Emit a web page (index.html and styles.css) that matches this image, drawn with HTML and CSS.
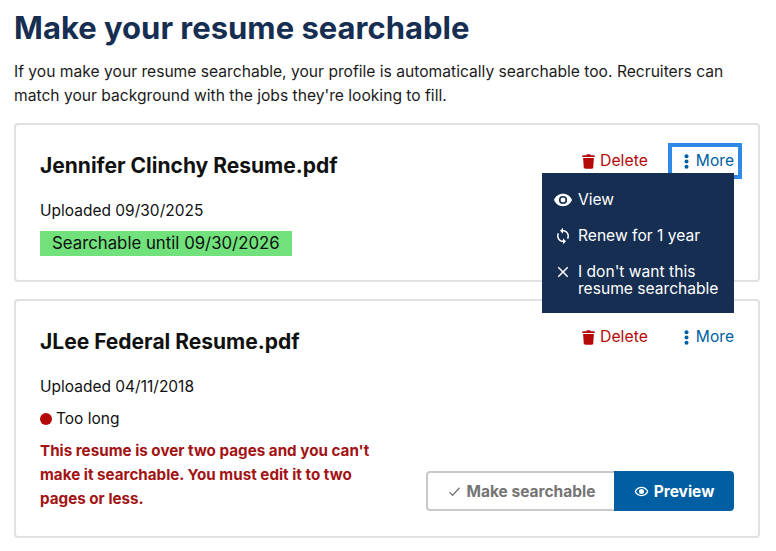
FILE: index.html
```html
<!DOCTYPE html>
<html lang="en">
<head>
<meta charset="utf-8">
<title>Make your resume searchable</title>
<link rel="stylesheet" href="styles.css">
</head>
<body>
<main class="page">
  <h1 class="title">Make your resume searchable</h1>
  <p class="intro">If you make your resume searchable, your profile is automatically searchable too. Recruiters can match your background with the jobs they're looking to fill.</p>

  <section class="card card-first">
    <div class="card-head">
      <h2 class="name">Jennifer Clinchy Resume.pdf</h2>
      <div class="actions">
        <button class="link link-delete">
          <svg class="ico" viewBox="0 0 14 16"><path d="M4.500 1.300C4.700.5 5.200.2 5.800.2h2.400c.6 0 1.100.3 1.300 1.100h3.300c.5 0 .9.300.9.800v1H.3v-1c0-.5.400-.8.900-.8zM1.200 4.200h11.600l-.7 10.300c-.1.800-.7 1.300-1.400 1.300H3.300c-.7 0-1.300-.5-1.400-1.300z" fill="#b50909"/></svg>
          Delete
        </button>
        <div class="more-wrap">
          <button class="link link-more is-focus">
            <svg class="ico-dots" viewBox="0 0 5 15"><circle cx="2.500" cy="2.300" r="2"/><circle cx="2.500" cy="7.500" r="2"/><circle cx="2.500" cy="12.700" r="2"/></svg>
            More
          </button>
          <ul class="menu">
            <li class="menu-item">
              <svg class="menu-ico" viewBox="1 1 22 22"><path d="M12 4.500C7 4.500 2.700 7.600 1 12c1.700 4.400 6 7.500 11 7.500s9.300-3.100 11-7.500c-1.700-4.400-6-7.500-11-7.500zM12 17a5 5 0 1 1 0-10 5 5 0 0 1 0 10zm0-8a3 3 0 1 0 0 6 3 3 0 0 0 0-6z" fill="#fff"/></svg>
              <span>View</span>
            </li>
            <li class="menu-item">
              <svg class="menu-ico" viewBox="0 0 24 24"><path d="M12 4V1L8 5l4 4V6c3.300 0 6 2.700 6 6 0 1-.25 2-.7 2.800l1.500 1.500C19.500 15 20 13.600 20 12c0-4.400-3.600-8-8-8zm0 14c-3.300 0-6-2.700-6-6 0-1 .25-2 .7-2.800L5.200 7.700C4.500 9 4 10.400 4 12c0 4.400 3.600 8 8 8v3l4-4-4-4z" fill="#fff"/></svg>
              <span>Renew for 1 year</span>
            </li>
            <li class="menu-item">
              <svg class="menu-ico" viewBox="0 0 24 24"><path d="M19 6.400 17.600 5 12 10.600 6.400 5 5 6.400 10.600 12 5 17.600 6.400 19 12 13.400 17.600 19 19 17.600 13.400 12z" fill="#fff"/></svg>
              <span>I don't want this<br>resume searchable</span>
            </li>
          </ul>
        </div>
      </div>
    </div>
    <p class="uploaded">Uploaded 09/30/2025</p>
    <p class="badge">Searchable until 09/30/2026</p>
  </section>

  <section class="card card-second">
    <div class="card-head">
      <h2 class="name">JLee Federal Resume.pdf</h2>
      <div class="actions">
        <button class="link link-delete">
          <svg class="ico" viewBox="0 0 14 16"><path d="M4.500 1.300C4.700.5 5.200.2 5.800.2h2.400c.6 0 1.100.3 1.300 1.100h3.300c.5 0 .9.300.9.800v1H.3v-1c0-.5.400-.8.900-.8zM1.200 4.200h11.600l-.7 10.300c-.1.800-.7 1.300-1.400 1.300H3.300c-.7 0-1.300-.5-1.400-1.300z" fill="#b50909"/></svg>
          Delete
        </button>
        <div class="more-wrap">
          <button class="link link-more">
            <svg class="ico-dots" viewBox="0 0 5 15"><circle cx="2.500" cy="2.300" r="2"/><circle cx="2.500" cy="7.500" r="2"/><circle cx="2.500" cy="12.700" r="2"/></svg>
            More
          </button>
        </div>
      </div>
    </div>
    <p class="uploaded">Uploaded 04/11/2018</p>
    <div class="card-foot">
      <div class="status">
        <p class="status-line"><span class="dot"></span>Too long</p>
        <p class="error">This resume is over two pages and you can't make it searchable. You must edit it to two pages or less.</p>
      </div>
      <div class="btn-group">
        <button class="btn btn-disabled">
          <svg class="btn-ico" viewBox="0 0 24 24"><path d="M4 13l5 5L20 6" fill="none" stroke="#757575" stroke-width="2"/></svg>
          Make searchable
        </button>
        <button class="btn btn-primary">
          <svg class="btn-ico" viewBox="0 0 24 24"><path d="M12 4.500C7 4.500 2.700 7.600 1 12c1.700 4.400 6 7.500 11 7.500s9.300-3.100 11-7.500c-1.700-4.400-6-7.500-11-7.500zm0 13c-3.500 0-7-2.300-8.800-5.500C5 8.800 8.500 6.500 12 6.500s7 2.300 8.800 5.500c-1.800 3.200-5.300 5.500-8.800 5.500zM12 8a4 4 0 1 0 0 8 4 4 0 0 0 0-8z" fill="#fff"/></svg>
          Preview
        </button>
      </div>
    </div>
  </section>
</main>
</body>
</html>
```

FILE: styles.css
```css
* { box-sizing: border-box; }
html, body { margin: 0; padding: 0; background: #fff; }
body { font-family: "Inter", "Liberation Sans", sans-serif; color: #1b1b1b; font-size: 16px; overflow: hidden; }
.page { width: 776px; height: 551px; padding: 9px 16px 0 14px; }
.title { margin: 0; font-size: 31px; line-height: 38px; font-weight: 700; color: #162e51; }
.intro { margin: 13px 0 0; font-size: 15.630px; line-height: 24px; width: 740px; }
.card { border: 2px solid #dfe1e2; border-radius: 4px; padding: 24px 24px 0; background: #fff; }
.card-first { margin-top: 15px; height: 159px; }
.card-second { margin-top: 17px; height: 239px; }
.card-head { display: flex; justify-content: space-between; align-items: flex-start; }
.name { margin: 4px 0 0; font-size: 21px; line-height: 26px; font-weight: 700; color: #111; }
.actions { display: flex; gap: 28px; align-items: center; margin-top: 2px; height: 20px; }
.link { border: 0; background: none; padding: 0; font: inherit; font-size: 15.600px; line-height: 20px; display: flex; align-items: center; gap: 5px; cursor: pointer; }
.link-delete { color: #b50909; font-size: 15.800px; }
.link-more { color: #005ea2; padding-left: 7px; }
.is-focus { outline: 4px solid #2e8ae6; outline-offset: 4px; }
.more-wrap { position: relative; }
.ico { width: 13px; height: 15px; }
.ico-dots { width: 5px; height: 15px; fill: #005ea2; margin: 0 2px 0 1px; }
.menu { position: absolute; top: 22px; right: 0; width: 192px; height: 140px; margin: 0; padding: 18px 12px 0; list-style: none; background: #162e51; color: #fff; z-index: 2; }
.menu-item { display: flex; gap: 6px; font-size: 15.600px; line-height: 17px; margin-bottom: 18px; }
.menu-ico { width: 18px; height: 18px; flex: none; }
.uploaded { margin: 22px 0 0; font-size: 15.500px; line-height: 20px; color: #111; }
.badge { margin: 10px 0 0; width: 252px; height: 25px; padding-left: 12px; background: #70e17b; font-size: 16.800px; line-height: 25px; color: #111; }
.card-foot { display: flex; justify-content: space-between; align-items: flex-end; }
.status { width: 345px; }
.status-line { margin: 12px 0 0; display: flex; align-items: center; gap: 4px; font-size: 15.500px; line-height: 20px; color: #111; }
.dot { width: 12px; height: 12px; border-radius: 50%; background: #b50909; }
.error { margin: 10px 0 0; font-size: 15.200px; line-height: 24px; font-weight: 700; color: #a31313; }
.btn-group { display: flex; }
.btn { height: 40px; font: inherit; font-size: 15.500px; font-weight: 700; display: flex; align-items: center; justify-content: center; gap: 5px; }
.btn-disabled { width: 188px; border: 2px solid #c9c9c9; border-right: 0; border-radius: 4px 0 0 4px; background: #fff; color: #757575; }
.btn-primary { width: 120px; border: 0; border-radius: 0 4px 4px 0; background: #005ea2; color: #fff; }
.btn-ico { width: 15px; height: 15px; }
```
